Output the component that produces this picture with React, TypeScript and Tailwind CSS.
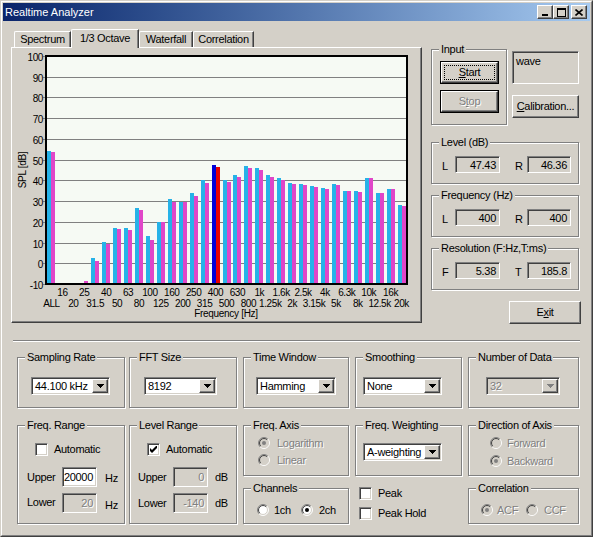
import React from "react";

const sunken =
  "border border-t-[#808080] border-l-[#808080] border-b-white border-r-white shadow-[inset_1px_1px_0_#404040,inset_-1px_-1px_0_#d4d0c8]";
const raised =
  "border border-t-white border-l-white border-b-[#404040] border-r-[#404040] shadow-[inset_-1px_-1px_0_#808080]";
const etched = "border border-[#808080] shadow-[inset_1px_1px_0_#fff,1px_1px_0_#fff]";
const dis = "text-[#808080] [text-shadow:1px_1px_0_#fff]";

function Group({ title, className = "", children }: { title: string; className?: string; children?: React.ReactNode }) {
  return (
    <div className={`${etched} ${className}`}>
      <div className="-mt-[7px] ml-[7px] h-[13px] w-fit whitespace-nowrap bg-[#d4d0c8] px-[2px] leading-[13px]">{title}</div>
      {children}
    </div>
  );
}

function Arrow({ disabled = false }: { disabled?: boolean }) {
  return (
    <svg width="7" height="4" viewBox="0 0 7 4" shapeRendering="crispEdges">
      <path d="M0 0h7v1h-1v1h-1v1h-1v1h-1v-1h-1v-1h-1v-1h-1z" fill={disabled ? "#808080" : "#000"} />
    </svg>
  );
}

function Combo({ value, className = "", disabled = false }: { value: string; className?: string; disabled?: boolean }) {
  return (
    <div className={`${sunken} flex h-[18px] p-[1px] ${disabled ? "bg-[#d4d0c8]" : "bg-white"} ${className}`}>
      <div className={`flex-1 overflow-hidden whitespace-nowrap pl-[2px] leading-[14px] ${disabled ? dis : ""}`}>{value}</div>
      <div className={`${raised} flex w-[16px] items-center justify-center bg-[#d4d0c8]`}>
        <Arrow disabled={disabled} />
      </div>
    </div>
  );
}

function Edit({ value, className = "", disabled = false, white = false }: { value: string; className?: string; disabled?: boolean; white?: boolean }) {
  return (
    <div
      className={`${sunken} flex items-center justify-end pr-[3px] ${white ? "bg-white" : "bg-[#d4d0c8]"} ${className}`}
    >
      <span className={disabled ? dis : ""}>{value}</span>
    </div>
  );
}

function CheckBox({ checked = false }: { checked?: boolean }) {
  return (
    <div className={`${sunken} flex h-[13px] w-[13px] shrink-0 items-center justify-center bg-white`}>
      {checked && (
        <svg width="7" height="7" viewBox="0 0 7 7">
          <path d="M0 2L2 4L7 -1V2L2 7L0 5Z" fill="#000" />
        </svg>
      )}
    </div>
  );
}

function Radio({ checked = false, disabled = false }: { checked?: boolean; disabled?: boolean }) {
  const a = 0.7071;
  const p = (r: number, s: number) => `M${6 - r * a} ${6 + r * a} A${r} ${r} 0 0 ${s} ${6 + r * a} ${6 - r * a}`;
  return (
    <svg width="12" height="12" viewBox="0 0 12 12" className="shrink-0">
      <circle cx="6" cy="6" r="5" fill={disabled ? "#d4d0c8" : "#fff"} />
      <path d={p(5.5, 1)} stroke="#808080" fill="none" />
      <path d={p(5.5, 0)} stroke="#fff" fill="none" />
      <path d={p(4.5, 1)} stroke="#404040" fill="none" />
      <path d={p(4.5, 0)} stroke="#d4d0c8" fill="none" />
      {checked && <circle cx="6" cy="6" r="2" fill={disabled ? "#808080" : "#000"} />}
    </svg>
  );
}

function Button({ children, className = "" }: { children: React.ReactNode; className?: string }) {
  return <div className={`${raised} flex items-center justify-center bg-[#d4d0c8] ${className}`}>{children}</div>;
}

const bands = [
  "ALL", "16", "20", "25", "31.5", "40", "50", "63", "80", "100", "125", "160", "200", "250", "315", "400", "500",
  "630", "800", "1k", "1.25k", "1.6k", "2k", "2.5k", "3.15k", "4k", "5k", "6.3k", "8k", "10k", "12.5k", "16k", "20k",
];
const Lv = [
  54.1, -20, -20, -9.8, 2.4, 10.1, 17.2, 17.1, 26.6, 13.0, 19.8, 30.8, 29.8, 34.0, 40.1, 47.43, 40.0, 42.7, 46.9, 45.9,
  42.7, 41.1, 38.8, 38.2, 37.4, 36.2, 38.3, 34.8, 34.8, 41.2, 34.0, 35.7, 28.2,
];
const Rv = [
  53.6, -20, -20, -8.7, 1.0, 9.2, 16.4, 16.0, 25.6, 11.1, 19.8, 29.8, 29.8, 32.4, 38.8, 46.36, 39.1, 41.7, 45.9, 44.9,
  41.7, 40.1, 38.2, 37.8, 36.7, 35.7, 37.7, 34.8, 34.3, 40.9, 34.0, 35.7, 27.5,
];

function Chart() {
  const X0 = 34, X1 = 395, Y0 = 8, Y1 = 236;
  const sw = (X1 - X0) / 33;
  const ky = (Y1 - Y0) / 110;
  const yOf = (v: number) => Math.round(Y1 - (v + 10) * ky);
  const grid = Array.from({ length: 12 }, (_, k) => Math.round(Y0 + k * ((Y1 - Y0) / 11)));
  const font = "'Liberation Sans', Arial, sans-serif";
  return (
    <svg width="408" height="273" viewBox="0 0 408 273" fontFamily={font} fontSize="10">
      <rect x={X0} y={Y0} width={X1 - X0} height={Y1 - Y0} fill="#f6faf4" />
      {grid.map((y, k) => (
        <g key={k}>
          <rect x={X0 - 3} y={y} width={X1 - X0 + 3} height={1} fill="#808080" shapeRendering="crispEdges" />
          <text x={31} y={y + 1} textAnchor="end" dominantBaseline="central" letterSpacing="-0.4" fill="#000">
            {100 - k * 10}
          </text>
        </g>
      ))}
      {bands.map((_, i) => {
        const cx = Math.round(X0 + sw * (i + 0.5));
        const hi = i === 15;
        return (
          <g key={i} shapeRendering="crispEdges">
            {Lv[i] > -10 && (
              <rect x={cx - 4} y={yOf(Lv[i])} width={4} height={Y1 - yOf(Lv[i])} fill={hi ? "#0000d8" : "#26b2e8"} />
            )}
            {Rv[i] > -10 && (
              <rect x={cx} y={yOf(Rv[i])} width={4} height={Y1 - yOf(Rv[i])} fill={hi ? "#e80000" : "#e046c8"} />
            )}
          </g>
        );
      })}
      <g fill="#000" shapeRendering="crispEdges">
        <rect x={X0 - 1} y={Y0 - 1} width={X1 - X0 + 2} height={2} />
        <rect x={X0 - 1} y={Y1 - 1} width={X1 - X0 + 2} height={2} />
        <rect x={X0 - 1} y={Y0 - 1} width={2} height={Y1 - Y0 + 2} />
        <rect x={X1 - 1} y={Y0 - 1} width={2} height={Y1 - Y0 + 2} />
      </g>
      {bands.map((b, i) => {
        const cx = X0 + sw * (i + 0.5);
        return (
          <text
            key={b}
            x={cx}
            y={i % 2 === 1 ? 244 : 255}
            textAnchor="middle"
            dominantBaseline="central"
            letterSpacing="-0.4"
            fill="#000"
          >
            {b}
          </text>
        );
      })}
      <text x={214} y={265} textAnchor="middle" dominantBaseline="central" letterSpacing="-0.3" fill="#000">
        Frequency [Hz]
      </text>
      <text
        x={10.5}
        y={122}
        textAnchor="middle"
        dominantBaseline="central"
        transform="rotate(-90 10.5 122)"
        letterSpacing="-0.3"
        fill="#000"
      >
        SPL [dB]
      </text>
    </svg>
  );
}

function CaptionBtn({ children, className = "" }: { children: React.ReactNode; className?: string }) {
  return (
    <div className={`${raised} flex h-[14px] w-[16px] items-center justify-center bg-[#d4d0c8] ${className}`}>
      {children}
    </div>
  );
}

export default function App() {
  return (
    <div className="h-[537px] w-[593px] border border-b-[#404040] border-l-[#d4d0c8] border-r-[#404040] border-t-[#d4d0c8] bg-[#d4d0c8] font-['Liberation_Sans',Arial,sans-serif] text-[11px] tracking-[-0.3px] text-black">
      <div className="flex h-full flex-col border border-b-[#808080] border-l-white border-r-[#808080] border-t-white p-[1px]">
        {/* Title bar */}
        <div className="flex h-[18px] shrink-0 items-center bg-linear-to-r from-[#0a246a] to-[#a6caf0] pl-[2px] pr-[3px]">
          <div className="flex-1 text-[11px] tracking-normal text-white">Realtime Analyzer</div>
          <CaptionBtn>
            <svg width="8" height="8" viewBox="0 0 8 8" shapeRendering="crispEdges">
              <rect x="1" y="6" width="6" height="2" fill="#000" />
            </svg>
          </CaptionBtn>
          <CaptionBtn>
            <svg width="9" height="9" viewBox="0 0 9 9" shapeRendering="crispEdges">
              <path d="M0 0h9v9h-9zM1 2v6h7v-6z" fill="#000" fillRule="evenodd" />
            </svg>
          </CaptionBtn>
          <CaptionBtn className="ml-[2px]">
            <svg width="8" height="7" viewBox="0 0 8 7">
              <path d="M0.5 0.5L7.5 6.5M7.5 0.5L0.5 6.5" stroke="#000" strokeWidth="1.6" />
            </svg>
          </CaptionBtn>
        </div>

        {/* Top area */}
        <div className="flex pl-[8px] pt-[8px]">
          {/* Tab control */}
          <div className="flex w-[411px] flex-col">
            <div className="flex h-[18px] items-end pl-[3px]">
              <div className="flex h-[16px] w-[57px] items-center justify-center rounded-tl-[2px] border-l border-t border-white shadow-[inset_-1px_0_0_#808080] [border-right:1px_solid_#404040]">
                Spectrum
              </div>
              <div className="relative z-10 -mb-px flex h-[19px] w-[68px] items-start justify-center rounded-tl-[2px] border-l border-t border-white bg-[#d4d0c8] pt-[1px] leading-[14px] shadow-[inset_-1px_0_0_#808080] [border-right:1px_solid_#404040]">
                1/3 Octave
              </div>
              <div className="flex h-[16px] w-[54px] items-center justify-center rounded-tl-[2px] border-l border-t border-white shadow-[inset_-1px_0_0_#808080] [border-right:1px_solid_#404040]">
                Waterfall
              </div>
              <div className="flex h-[16px] w-[61px] items-center justify-center rounded-tl-[2px] border-l border-t border-white shadow-[inset_-1px_0_0_#808080] [border-right:1px_solid_#404040]">
                Correlation
              </div>
            </div>
            <div className={`${raised} h-[276px] w-[411px] bg-[#d4d0c8]`}>
              <Chart />
            </div>
          </div>

          {/* Right column */}
          <div className="ml-[9px] flex w-[150px] flex-col">
            <div className="mt-[20px] flex items-start">
              <Group title="Input" className="h-[76px] w-[76px]">
                <div className="ml-[8px] mt-[5px] h-[23px] w-[59px] border border-black">
                  <div className={`${raised} h-full w-full p-[2px]`}>
                    <div className="flex h-full w-full items-center justify-center border border-dotted border-black">
                      <span>
                        <u>S</u>tart
                      </span>
                    </div>
                  </div>
                </div>
                <div className="ml-[8px] mt-[6px] h-[23px] w-[59px] border border-black">
                  <div className={`${raised} flex h-full w-full items-center justify-center`}>
                    <span className={dis}>
                      S<u>t</u>op
                    </span>
                  </div>
                </div>
              </Group>
              <div className="ml-[5px] flex flex-col">
                <div className={`${sunken} mt-[2px] h-[33px] w-[67px] bg-[#d4d0c8] pl-[3px] pt-[3px] leading-[13px]`}>
                  wave
                </div>
                <Button className="mt-[11px] h-[23px] w-[67px]">
                  <span>
                    <u>C</u>alibration...
                  </span>
                </Button>
              </div>
            </div>

            <Group title="Level (dB)" className="mt-[17px] h-[42px] w-[148px]">
              <div className="mt-[6px] flex items-center pl-[10px]">
                <span className="w-[13px] pt-[3px]">L</span>
                <Edit value="47.43" className="h-[17px] w-[45px]" />
                <span className="ml-[15px] w-[12px] pt-[3px]">R</span>
                <Edit value="46.36" className="h-[17px] w-[44px]" />
              </div>
            </Group>
            <Group title="Frequency (Hz)" className="mt-[11px] h-[42px] w-[148px]">
              <div className="mt-[6px] flex items-center pl-[10px]">
                <span className="w-[13px] pt-[3px]">L</span>
                <Edit value="400" className="h-[17px] w-[45px]" />
                <span className="ml-[15px] w-[12px] pt-[3px]">R</span>
                <Edit value="400" className="h-[17px] w-[44px]" />
              </div>
            </Group>
            <Group title="Resolution (F:Hz,T:ms)" className="mt-[11px] h-[42px] w-[148px]">
              <div className="mt-[6px] flex items-center pl-[10px]">
                <span className="w-[13px] pt-[3px]">F</span>
                <Edit value="5.38" className="h-[17px] w-[45px]" />
                <span className="ml-[15px] w-[12px] pt-[3px]">T</span>
                <Edit value="185.8" className="h-[17px] w-[44px]" />
              </div>
            </Group>
            <Button className="mt-[11px] h-[23px] w-[72px] self-end">
              <span>
                E<u>x</u>it
              </span>
            </Button>
          </div>
        </div>

        {/* Separator */}
        <div className="ml-[10px] mt-[16px] h-[2px] w-[567px] border-b border-t border-b-white border-t-[#808080]" />

        {/* Bottom settings */}
        <div className="mt-[15px] flex pl-[14px]">
          {/* Col 1 */}
          <div className="flex w-[108px] flex-col">
            <Group title="Sampling Rate" className="h-[51px]">
              <Combo value="44.100 kHz" className="ml-[13px] mt-[13px] w-[79px]" />
            </Group>
            <Group title="Freq. Range" className="mt-[17px] h-[99px]">
              <div className="ml-[17px] mt-[11px] flex h-[13px] items-center">
                <CheckBox />
                <span className="ml-[6px]">Automatic</span>
              </div>
              <div className="ml-[9px] mt-[11px] flex items-center">
                <span className="w-[35px]">Upper</span>
                <Edit value="20000" white className="h-[20px] w-[35px]" />
                <span className="ml-[8px] pt-[2px]">Hz</span>
              </div>
              <div className="ml-[9px] mt-[6px] flex items-center">
                <span className="w-[35px] pb-[2px]">Lower</span>
                <Edit value="20" disabled className="h-[20px] w-[35px]" />
                <span className="ml-[8px] pt-[4px]">Hz</span>
              </div>
            </Group>
          </div>

          {/* Col 2 */}
          <div className="ml-[4px] flex w-[108px] flex-col">
            <Group title="FFT Size" className="h-[51px]">
              <Combo value="8192" className="ml-[14px] mt-[13px] w-[73px]" />
            </Group>
            <Group title="Level Range" className="mt-[17px] h-[99px]">
              <div className="ml-[17px] mt-[11px] flex h-[13px] items-center">
                <CheckBox checked />
                <span className="ml-[6px]">Automatic</span>
              </div>
              <div className="ml-[8px] mt-[11px] flex items-center">
                <span className="w-[35px]">Upper</span>
                <Edit value="0" disabled className="h-[20px] w-[35px]" />
                <span className="ml-[7px]">dB</span>
              </div>
              <div className="ml-[8px] mt-[6px] flex items-center">
                <span className="w-[35px]">Lower</span>
                <Edit value="-140" disabled className="h-[20px] w-[35px]" />
                <span className="ml-[7px]">dB</span>
              </div>
            </Group>
          </div>

          {/* Col 3 */}
          <div className="ml-[6px] flex w-[106px] flex-col">
            <Group title="Time Window" className="h-[51px]">
              <Combo value="Hamming" className="ml-[12px] mt-[13px] w-[80px]" />
            </Group>
            <Group title="Freq. Axis" className="mt-[17px] h-[51px]">
              <div className="ml-[14px] mt-[5px] flex h-[12px] items-center">
                <Radio checked disabled />
                <span className={`ml-[7px] ${dis}`}>Logarithm</span>
              </div>
              <div className="ml-[14px] mt-[5px] flex h-[12px] items-center">
                <Radio disabled />
                <span className={`ml-[7px] ${dis}`}>Linear</span>
              </div>
            </Group>
            <Group title="Channels" className="mt-[12px] h-[36px]">
              <div className="ml-[13px] mt-[9px] flex h-[12px] items-center">
                <div className="flex w-[44px] items-center">
                  <Radio />
                  <span className="ml-[5px]">1ch</span>
                </div>
                <Radio checked />
                <span className="ml-[6px]">2ch</span>
              </div>
            </Group>
          </div>

          {/* Col 4 */}
          <div className="ml-[6px] flex w-[107px] flex-col">
            <Group title="Smoothing" className="h-[51px]">
              <Combo value="None" className="ml-[7px] mt-[13px] w-[79px]" />
            </Group>
            <Group title="Freq. Weighting" className="mt-[17px] h-[51px]">
              <Combo value="A-weighting" className="ml-[7px] mt-[11px] w-[79px]" />
            </Group>
            <div className="ml-[4px] mt-[11px] flex h-[13px] items-center">
              <CheckBox />
              <span className="ml-[6px]">Peak</span>
            </div>
            <div className="ml-[4px] mt-[7px] flex h-[13px] items-center">
              <CheckBox />
              <span className="ml-[6px]">Peak Hold</span>
            </div>
          </div>

          {/* Col 5 */}
          <div className="ml-[6px] flex w-[111px] flex-col">
            <Group title="Number of Data" className="h-[51px]">
              <Combo value="32" disabled className="ml-[17px] mt-[13px] w-[74px]" />
            </Group>
            <Group title="Direction of Axis" className="mt-[17px] h-[51px]">
              <div className="ml-[21px] mt-[5px] flex h-[12px] items-center">
                <Radio disabled />
                <span className={`ml-[5px] ${dis}`}>Forward</span>
              </div>
              <div className="ml-[21px] mt-[6px] flex h-[12px] items-center">
                <Radio checked disabled />
                <span className={`ml-[5px] ${dis}`}>Backward</span>
              </div>
            </Group>
            <Group title="Correlation" className="mt-[12px] h-[36px]">
              <div className="ml-[12px] mt-[9px] flex h-[12px] items-center">
                <div className="flex w-[45px] items-center">
                  <Radio checked disabled />
                  <span className={`ml-[4px] ${dis}`}>ACF</span>
                </div>
                <Radio disabled />
                <span className={`ml-[6px] ${dis}`}>CCF</span>
              </div>
            </Group>
          </div>
        </div>
      </div>
    </div>
  );
}
